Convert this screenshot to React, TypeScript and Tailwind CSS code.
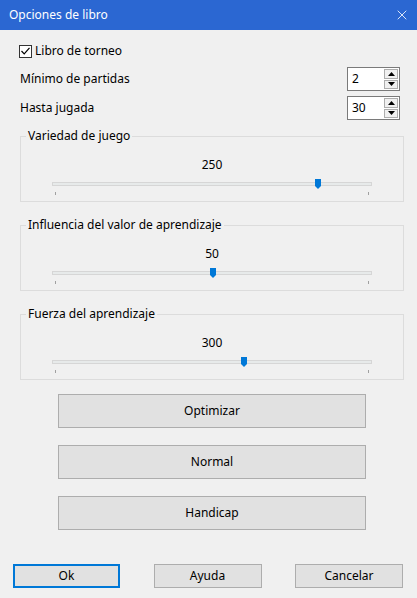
import { X } from 'lucide-react'

const font = { fontFamily: '"Segoe UI", "Noto Sans", sans-serif' }

function SpinBox({ value }: { value: string }) {
  return (
    <div className="flex h-[24px] w-[53px] border border-[#7a7a7a] bg-white">
      <div className="flex-1 pl-[4px] leading-[22px]">{value}</div>
      <div className="flex w-[15px] flex-col gap-[1px] py-[1px] pr-[1px]">
        <div className="flex flex-1 items-center justify-center border border-[#adadad] bg-[#f0f0f0]">
          <svg width="7" height="4" viewBox="0 0 7 4"><polygon points="0,4 7,4 3.5,0" fill="#000" /></svg>
        </div>
        <div className="flex flex-1 items-center justify-center border border-[#adadad] bg-[#f0f0f0]">
          <svg width="7" height="4" viewBox="0 0 7 4"><polygon points="0,0 7,0 3.5,4" fill="#000" /></svg>
        </div>
      </div>
    </div>
  )
}

function SliderGroup({ title, value, max }: { title: string; value: number; max: number }) {
  const pct = value / max
  return (
    <div className="relative ml-[20px] mr-[13px] h-[66px] border border-[#dcdcdc]">
      <span className="absolute -top-[9px] left-[5px] bg-[#f0f0f0] px-[2px] leading-[16px]">{title}</span>
      <div className="mt-[20px] text-center leading-[16px]">{value}</div>
      {/* trackbar */}
      <div className="relative mx-[31px] mt-[9px]">
        <div className="h-[4px] border border-[#d6d6d6] bg-[#e7eaea]" />
        <svg
          className="absolute -top-[3px]"
          style={{ left: `${pct * 315}px` }}
          width="6" height="10" viewBox="0 0 6 10"
        >
          <polygon points="0,0 6,0 6,7 3,10 0,7" fill="#0078d7" />
        </svg>
        <div className="mt-[6px] flex justify-between px-[3px]">
          <div className="h-[3px] w-[1px] bg-[#a0a0a0]" />
          <div className="h-[3px] w-[1px] bg-[#a0a0a0]" />
        </div>
      </div>
    </div>
  )
}

function Btn({ children, className = '' }: { children: React.ReactNode; className?: string }) {
  return (
    <button className={`flex items-center justify-center border border-[#adadad] bg-[#e1e1e1] text-[12px] ${className}`}>
      {children}
    </button>
  )
}

export default function App() {
  return (
    <div className="flex h-[598px] w-[417px] flex-col bg-[#f0f0f0] text-[12px] text-black" style={font}>
      {/* title bar */}
      <div className="flex h-[30px] items-center justify-between bg-[#2b67d2] pl-[9px] pr-[7px] text-white">
        <span>Opciones de libro</span>
        <X size={16} strokeWidth={1.25} />
      </div>

      <label className="ml-[19px] mt-[13px] flex items-center gap-[3px] leading-[16px]">
        <span className="flex h-[13px] w-[13px] items-center justify-center border border-[#333] bg-white">
          <svg width="9" height="8" viewBox="0 0 9 8"><polyline points="0.5,4 3.2,6.8 8.5,0.8" fill="none" stroke="#000" strokeWidth="1.2" /></svg>
        </span>
        Libro de torneo
      </label>

      <div className="mt-[8px] flex items-center justify-between pl-[20px] pr-[17px]">
        <span>Mínimo de partidas</span>
        <SpinBox value="2" />
      </div>
      <div className="mt-[5px] flex items-center justify-between pl-[20px] pr-[17px]">
        <span>Hasta jugada</span>
        <SpinBox value="30" />
      </div>

      <div className="mt-[16px] flex flex-col gap-[23px]">
        <SliderGroup title="Variedad de juego" value={250} max={300} />
        <SliderGroup title="Influencia del valor de aprendizaje" value={50} max={100} />
        <SliderGroup title="Fuerza del aprendizaje" value={300} max={500} />
      </div>

      <div className="mt-[14px] flex flex-col gap-[17px] pl-[58px]">
        <Btn className="h-[34px] w-[308px]">Optimizar</Btn>
        <Btn className="h-[34px] w-[308px]">Normal</Btn>
        <Btn className="h-[34px] w-[308px]">Handicap</Btn>
      </div>

      <div className="mt-[34px] flex justify-between pl-[13px] pr-[14px]">
        <Btn className="h-[24px] w-[107px] !border-2 !border-[#0078d7]">Ok</Btn>
        <Btn className="h-[24px] w-[108px]">Ayuda</Btn>
        <Btn className="h-[24px] w-[108px]">Cancelar</Btn>
      </div>
    </div>
  )
}
